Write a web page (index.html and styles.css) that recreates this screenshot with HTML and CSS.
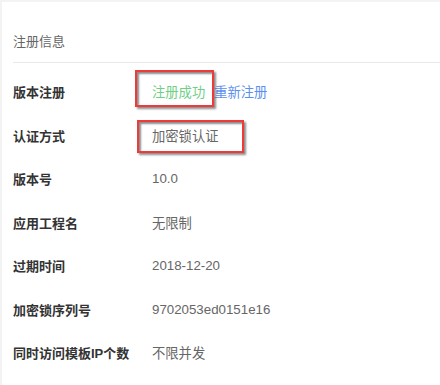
FILE: index.html
```html
<!DOCTYPE html>
<html lang="zh-CN">
<head>
    <meta charset="UTF-8">
    <meta name="viewport" content="width=device-width, initial-scale=1.0">
    <title>注册信息</title>
    <link rel="stylesheet" href="styles.css">
</head>
<body>
    <div class="card">
        <!-- Header -->
        <div class="card-title">注册信息</div>

        <!-- Info rows -->
        <div class="info-list">
            <div class="info-row">
                <span class="info-label">版本注册</span>
                <span class="info-value">
                    <span class="ok">注册成功</span><a class="link" href="#">重新注册</a>
                </span>
                <span class="mark mark-reg"></span>
            </div>
            <div class="info-row">
                <span class="info-label">认证方式</span>
                <span class="info-value">加密锁认证</span>
                <span class="mark mark-auth"></span>
            </div>
            <div class="info-row">
                <span class="info-label">版本号</span>
                <span class="info-value">10.0</span>
            </div>
            <div class="info-row">
                <span class="info-label">应用工程名</span>
                <span class="info-value">无限制</span>
            </div>
            <div class="info-row">
                <span class="info-label">过期时间</span>
                <span class="info-value">2018-12-20</span>
            </div>
            <div class="info-row">
                <span class="info-label">加密锁序列号</span>
                <span class="info-value">9702053ed0151e16</span>
            </div>
            <div class="info-row">
                <span class="info-label">同时访问模板IP个数</span>
                <span class="info-value">不限并发</span>
            </div>
        </div>
    </div>
</body>
</html>
```

FILE: styles.css
```css
/* Page */
body {
    margin: 0;
    background-color: #f3f3f3;
    font-family: "Liberation Sans", "Noto Sans CJK SC", sans-serif;
    font-size: 13px;
}

.card {
    margin: 2px 0 0 2px;
    padding-left: 11px;
    background-color: #ffffff;
    height: 383px;
}

/* Header */
.card-title {
    padding: 30px 0 10px;
    line-height: 20px;
    color: #666666;
    border-bottom: 1px solid #e9e9e9;
}

/* Rows */
.info-list {
    padding-top: 7px;
}

.info-row {
    position: relative;
    display: flex;
    align-items: center;
    height: 43.5px;
}

.info-label {
    width: 139px;
    flex-shrink: 0;
    color: #333333;
    font-weight: bold;
}

.info-value {
    color: #666666;
    font-size: 13.3px;
}

.ok {
    color: #6fcf86;
}

.link {
    color: #5b8ff0;
    text-decoration: none;
    margin-left: 9px;
}

/* Red annotation boxes */
.mark {
    position: absolute;
    border: 2px solid #f03a3a;
    box-shadow: 2px 2px 2px rgba(0, 0, 0, 0.45), inset 2px 2px 2px rgba(0, 0, 0, 0.45);
}

.mark-reg {
    left: 122px;
    top: 0;
    width: 75px;
    height: 33px;
}

.mark-auth {
    left: 124px;
    top: 6px;
    width: 103px;
    height: 29px;
}
```
